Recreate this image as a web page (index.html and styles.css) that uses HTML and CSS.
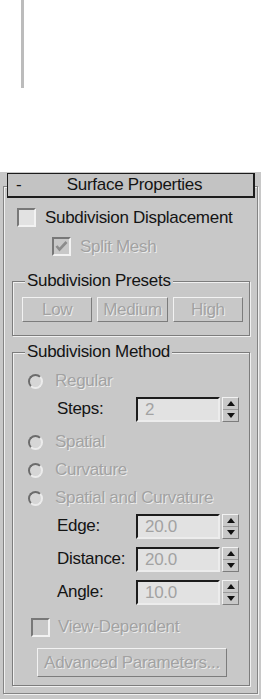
FILE: index.html
```html
<!DOCTYPE html>
<html lang="en">
<head>
    <meta charset="UTF-8">
    <meta name="viewport" content="width=device-width, initial-scale=1.0">
    <title>Surface Properties</title>
    <link rel="stylesheet" href="styles.css">
</head>
<body>
    <div class="stub"></div>
    <div class="rollout">
        <div class="frame">
            <div class="title"><span class="minus">-</span><span>Surface Properties</span><span></span></div>

            <div class="row row-main">
                <span class="check"></span>
                <span>Subdivision Displacement</span>
            </div>
            <div class="row row-split dis">
                <span class="check off">
                    <svg width="15" height="15" viewBox="0 0 15 15"><path d="M2.5 7 L5.5 10.5 L12.5 3" fill="none" stroke="#8c8c8c" stroke-width="2.6"/></svg>
                </span>
                <span>Split Mesh</span>
            </div>

            <fieldset class="group presets">
                <legend>Subdivision Presets</legend>
                <div class="btns">
                    <button disabled>Low</button>
                    <button disabled>Medium</button>
                    <button disabled>High</button>
                </div>
            </fieldset>

            <fieldset class="group method">
                <legend>Subdivision Method</legend>
                <div class="opt dis"><span class="radio"></span><span>Regular</span></div>
                <div class="param gap">
                    <span>Steps:</span>
                    <span class="field">2</span>
                    <span class="spinner"><i class="up"></i><i class="down"></i></span>
                </div>
                <div class="opt dis"><span class="radio"></span><span>Spatial</span></div>
                <div class="opt dis"><span class="radio"></span><span>Curvature</span></div>
                <div class="opt dis"><span class="radio"></span><span>Spatial and Curvature</span></div>
                <div class="param gap">
                    <span>Edge:</span>
                    <span class="field">20.0</span>
                    <span class="spinner"><i class="up"></i><i class="down"></i></span>
                </div>
                <div class="param gap">
                    <span>Distance:</span>
                    <span class="field">20.0</span>
                    <span class="spinner"><i class="up"></i><i class="down"></i></span>
                </div>
                <div class="param">
                    <span>Angle:</span>
                    <span class="field">10.0</span>
                    <span class="spinner"><i class="up"></i><i class="down"></i></span>
                </div>
                <div class="row row-view dis">
                    <span class="check off"></span>
                    <span>View-Dependent</span>
                </div>
                <button class="adv" disabled>Advanced Parameters...</button>
            </fieldset>
        </div>
    </div>
</body>
</html>
```

FILE: styles.css
```css
* { box-sizing: border-box; }
body { margin: 0; width: 261px; background: #fff; color: #141414;
       font-family: "Liberation Sans", Arial, sans-serif; font-size: 17px; letter-spacing: -0.3px; }
.stub { width: 3px; height: 88px; margin-left: 21px; background: #bcbcbc; }
.rollout { margin-top: 84px; padding: 14px 0 5px; background: #c8c8c8; }
.frame { margin: 0 3px; padding: 0 7px 7px 8px; border: 1px solid #848484;
         box-shadow: inset 1px 1px 0 #f0f0f0, 1px 1px 0 #f0f0f0; }

.title { display: grid; grid-template-columns: 1fr auto 1fr; align-items: center; height: 25px;
         margin: -14px -5px 0; padding-left: 8px; background: #c3c3c3; line-height: 20px;
         border: 1px solid #1c1c1c; border-right-width: 2px; border-bottom-width: 2px; }
.minus { font-size: 17px; }

.dis { color: #a2a2a2; text-shadow: 1px 1px 0 #ececec; }
.row { display: flex; align-items: center; height: 29px; }
.row-main { margin-top: 5px; padding-left: 5px; gap: 9px; }
.row-split { padding-left: 40px; gap: 9px; }
.check { width: 19px; height: 19px; flex: none; display: flex; align-items: center; justify-content: center;
         border: 2px solid; border-color: #787878 #f2f2f2 #f2f2f2 #787878; background: #e2e2e2; }
.check.off { background: #c8c8c8; }

.group { margin: 0; padding: 0; min-width: 0; border: 1px solid #7c7c7c;
         box-shadow: inset 1px 1px 0 #f0f0f0, 1px 1px 0 #f0f0f0; }
.group legend { margin-left: 12px; padding: 0 2px; line-height: 20px; background: #c8c8c8; }
.presets { margin-top: 10px; padding: 6px 0 13px; }
.btns { display: flex; gap: 5px; padding: 0 6px 0 9px; }
button { font: inherit; letter-spacing: inherit; height: 25px; padding: 0; background: #c8c8c8;
         color: #a2a2a2; text-shadow: 1px 1px 0 #ececec; border: 1px solid;
         border-color: #f2f2f2 #7c7c7c #7c7c7c #f2f2f2; }
.btns button { flex: 1; }

.method { margin-top: 6px; padding: 5px 0 8px; }
.opt { display: flex; align-items: center; gap: 12px; height: 28px; padding-left: 15px; }
.radio { width: 15px; height: 15px; flex: none; border-radius: 50%; border: 2px solid;
         border-color: #6c6c6c #ececec #ececec #6c6c6c; background: #d6d6d6; }
.param { display: grid; grid-template-columns: 77px 84px 17px; column-gap: 2px; align-items: center;
         height: 28px; padding-left: 44px; }
.param.gap { margin-bottom: 5px; }
.field { height: 25px; line-height: 21px; padding-left: 7px; background: #e2e2e2; color: #a2a2a2;
         border: 2px solid; border-color: #1c1c1c #ececec #ececec #1c1c1c; }
.spinner { display: flex; flex-direction: column; height: 25px; border: 1px solid;
           border-color: #f2f2f2 #7c7c7c #7c7c7c #f2f2f2; background: #c8c8c8; }
.spinner i { flex: 1; display: flex; align-items: center; justify-content: center; }
.spinner i + i { border-top: 1px solid #9a9a9a; }
.spinner i::before { content: ""; border-left: 4px solid transparent; border-right: 4px solid transparent; }
.up::before { border-bottom: 5px solid #111; }
.down::before { border-top: 5px solid #111; }

.row-view { margin-top: 7px; height: 28px; padding-left: 18px; gap: 8px; }
.adv { display: block; width: 190px; height: 29px; margin: 7px 0 0 24px; }
```
